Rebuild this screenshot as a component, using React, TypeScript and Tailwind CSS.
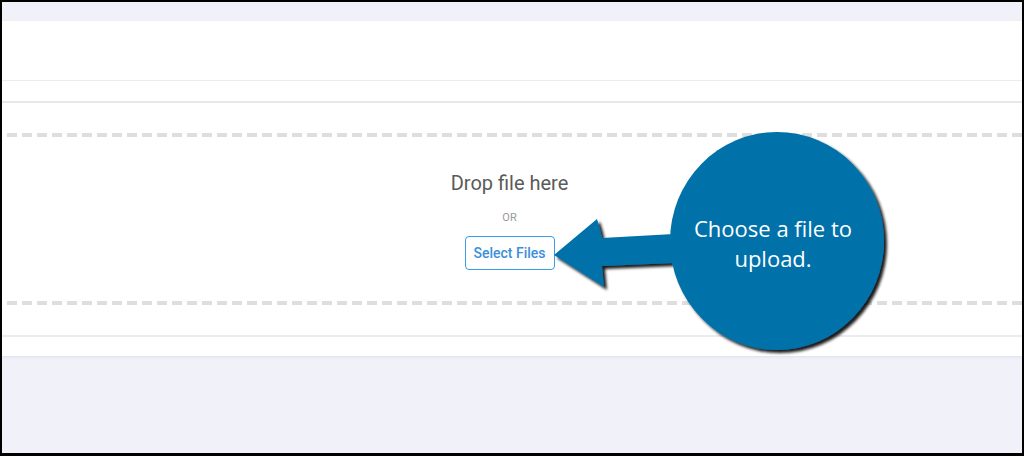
import React from "react";

// dashed divider strip, drawn with a gradient so dash/gap match exactly
const DashRow: React.FC = () => (
  <div className="h-[4px] w-full bg-[repeating-linear-gradient(90deg,transparent_0,transparent_5px,#dedede_5px,#dedede_15px)]" />
);

const Callout: React.FC = () => (
  <>
    <svg
      className="absolute left-0 top-0 pointer-events-none"
      width="1024"
      height="456"
      viewBox="0 0 1024 456"
    >
      <defs>
        <filter id="shadow" x="-20%" y="-20%" width="140%" height="140%">
          <feGaussianBlur in="SourceAlpha" stdDeviation="1.6" />
          <feOffset dx="3" dy="3" result="b" />
          <feComponentTransfer>
            <feFuncA type="linear" slope="0.9" />
          </feComponentTransfer>
          <feMerge>
            <feMergeNode />
            <feMergeNode in="SourceGraphic" />
          </feMerge>
        </filter>
      </defs>
      <g filter="url(#shadow)" fill="#0071a9">
        <path d="M552 253 L595 217 Q598 226 600 236 L672 232 L672 261 L600 264 Q601 275 602 285 Z" />
        <ellipse cx="775" cy="239" rx="107" ry="109" />
      </g>
    </svg>
    <div className="absolute left-[664px] top-[211px] w-[214px] text-center text-white text-[22px] leading-[30px] font-['Open_Sans',sans-serif]">
      Choose a file to
      <br />
      upload.
    </div>
  </>
);

export default function App() {
  return (
    <div className="relative h-[456px] w-[1024px] overflow-hidden border-t-2 border-l-2 border-r-2 border-b-[3px] border-black bg-[#f1f1f9] font-['Roboto',sans-serif]">
      <div className="h-[19px]" />
      <div className="bg-white shadow-[0_1px_3px_rgba(0,0,0,0.08)]">
        <div className="h-[60px] border-b border-[#ececec]" />
        <div className="h-[22px] border-b-2 border-[#e8e8e8]" />
        <div className="h-[30px]" />
        <DashRow />
        <div className="h-[164px] flex flex-col items-center pt-[34px] pr-[5px]">
          <div className="text-[20px] leading-[24px] text-[#5a5a5a]">Drop file here</div>
          <div className="mt-[15px] text-[11px] leading-[16px] text-[#9a9a9a]">OR</div>
          <button className="mt-[10px] h-[34px] w-[90px] rounded-[4px] border border-[#3a9be6] text-[14px] font-medium text-[#3a8fd9]">
            Select Files
          </button>
        </div>
        <DashRow />
        <div className="h-[32px] border-b-2 border-[#ececec]" />
        <div className="h-[19px]" />
      </div>
      <Callout />
    </div>
  );
}
